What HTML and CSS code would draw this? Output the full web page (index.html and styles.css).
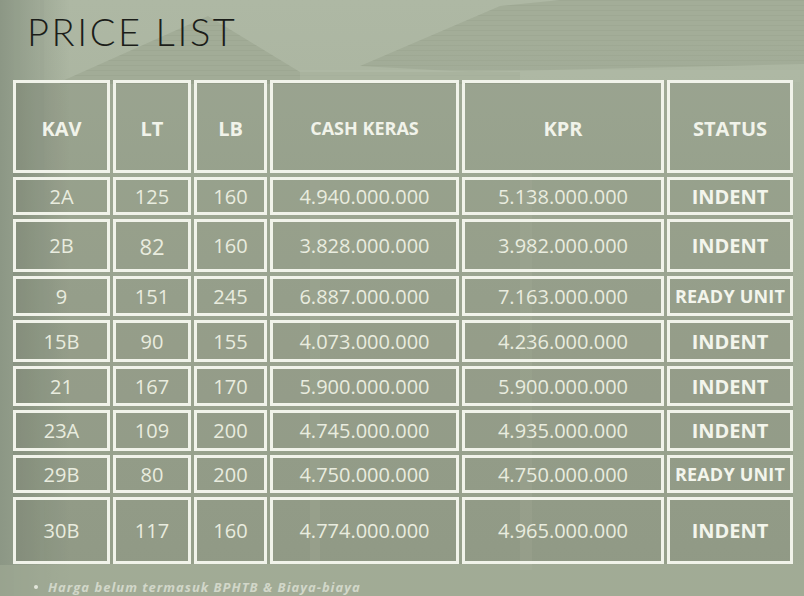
FILE: index.html
```html
<!DOCTYPE html>
<html lang="id">
<head>
<meta charset="utf-8">
<title>Price List</title>
<link rel="stylesheet" href="styles.css">
</head>
<body>
<div class="page">
  <svg class="backdrop" width="804" height="596" viewBox="0 0 804 596" aria-hidden="true">
    <defs>
      <linearGradient id="sky" x1="0" y1="0" x2="0" y2="1">
        <stop offset="0" stop-color="#aeb8a4"/>
        <stop offset="0.5" stop-color="#a6b09b"/>
        <stop offset="1" stop-color="#a0aa95"/>
      </linearGradient>
      <linearGradient id="trees" x1="0" y1="0" x2="1" y2="0">
        <stop offset="0" stop-color="#8c9785"/>
        <stop offset="1" stop-color="#8c9785" stop-opacity="0"/>
      </linearGradient>
      <pattern id="tiles" width="10" height="5" patternUnits="userSpaceOnUse">
        <rect width="10" height="5" fill="#a0aa95"/>
        <rect width="10" height="1" fill="#9aa48f"/>
      </pattern>
    </defs>
    <rect width="804" height="596" fill="url(#sky)"/>
    <polygon points="60,82 208,16 300,72 520,72 520,84 60,84" fill="url(#tiles)" opacity="0.85"/>
    <polygon points="360,66 500,6 560,0 804,0 804,64 470,72" fill="url(#tiles)" opacity="0.8"/>
    <rect x="300" y="70" width="500" height="12" fill="#b0baa6" opacity="0.5"/>
    <rect x="0" y="0" width="70" height="596" fill="url(#trees)"/>
    <rect x="14" y="0" width="6" height="596" fill="#93a08c" opacity="0.5"/>
    <rect x="40" y="0" width="4" height="596" fill="#9aa694" opacity="0.4"/>
    <rect x="310" y="170" width="10" height="400" fill="#b5beaa" opacity="0.35"/>
    <rect x="520" y="170" width="12" height="400" fill="#b5beaa" opacity="0.3"/>
    <rect x="0" y="565" width="804" height="31" fill="#a1ab96" opacity="0.6"/>
  </svg>

  <h1 class="title">PRICE LIST</h1>

  <div class="grid">
    <div class="cell head r-head">KAV</div>
    <div class="cell head r-head">LT</div>
    <div class="cell head r-head">LB</div>
    <div class="cell head head-sm r-head">CASH KERAS</div>
    <div class="cell head r-head">KPR</div>
    <div class="cell head r-head">STATUS</div>

    <div class="cell r-a">2A</div>
    <div class="cell r-a">125</div>
    <div class="cell r-a">160</div>
    <div class="cell r-a">4.940.000.000</div>
    <div class="cell r-a">5.138.000.000</div>
    <div class="cell status r-a">INDENT</div>

    <div class="cell r-b">2B</div>
    <div class="cell big r-b">82</div>
    <div class="cell r-b">160</div>
    <div class="cell r-b">3.828.000.000</div>
    <div class="cell r-b">3.982.000.000</div>
    <div class="cell status r-b">INDENT</div>

    <div class="cell r-c">9</div>
    <div class="cell r-c">151</div>
    <div class="cell r-c">245</div>
    <div class="cell r-c">6.887.000.000</div>
    <div class="cell r-c">7.163.000.000</div>
    <div class="cell status ready r-c">READY UNIT</div>

    <div class="cell r-d">15B</div>
    <div class="cell r-d">90</div>
    <div class="cell r-d">155</div>
    <div class="cell r-d">4.073.000.000</div>
    <div class="cell r-d">4.236.000.000</div>
    <div class="cell status r-d">INDENT</div>

    <div class="cell r-e">21</div>
    <div class="cell r-e">167</div>
    <div class="cell r-e">170</div>
    <div class="cell r-e">5.900.000.000</div>
    <div class="cell r-e">5.900.000.000</div>
    <div class="cell status r-e">INDENT</div>

    <div class="cell r-f">23A</div>
    <div class="cell r-f">109</div>
    <div class="cell r-f">200</div>
    <div class="cell r-f">4.745.000.000</div>
    <div class="cell r-f">4.935.000.000</div>
    <div class="cell status r-f">INDENT</div>

    <div class="cell r-g">29B</div>
    <div class="cell r-g">80</div>
    <div class="cell r-g">200</div>
    <div class="cell r-g">4.750.000.000</div>
    <div class="cell r-g">4.750.000.000</div>
    <div class="cell status ready r-g">READY UNIT</div>

    <div class="cell r-h">30B</div>
    <div class="cell r-h">117</div>
    <div class="cell r-h">160</div>
    <div class="cell r-h">4.774.000.000</div>
    <div class="cell r-h">4.965.000.000</div>
    <div class="cell status r-h">INDENT</div>
  </div>

  <ul class="notes">
    <li>Harga belum termasuk BPHTB &amp; Biaya-biaya</li>
  </ul>
</div>
</body>
</html>
```

FILE: styles.css
```css
html, body {
  margin: 0;
  padding: 0;
  background: #a6b09b;
}

.page {
  position: relative;
  width: 804px;
  height: 596px;
  overflow: hidden;
  font-family: "Open Sans", "DejaVu Sans", sans-serif;
}

.backdrop {
  position: absolute;
  left: 0;
  top: 0;
  z-index: 0;
}

.title {
  position: relative;
  z-index: 1;
  margin: 0;
  padding: 11px 0 0 27px;
  height: 70px;
  box-sizing: border-box;
  font-family: "Lato", "DejaVu Sans", sans-serif;
  font-weight: 300;
  font-size: 38px;
  line-height: 40px;
  letter-spacing: 2.6px;
  color: #1b1d19;
}

.grid {
  position: relative;
  z-index: 1;
  margin: 10px 0 0 13px;
  display: grid;
  grid-template-columns: 97px 78px 73px 189px 202px 126px;
  grid-template-rows: 93px 38px 53px 40px 42px 40px 41px 38px 67px;
  column-gap: 3px;
  row-gap: 4px;
  width: max-content;
  background: rgba(70, 80, 62, 0.12);
}

.cell {
  box-sizing: border-box;
  border: 3px solid #f1f3ea;
  background: rgba(80, 90, 70, 0.07);
  display: flex;
  align-items: center;
  justify-content: center;
  color: #e9ecdf;
  font-size: 20px;
  font-weight: 400;
  white-space: nowrap;
}

.head {
  font-weight: 700;
  color: #f1f3ea;
  padding-top: 3px;
}

.head-sm {
  font-size: 18px;
}

.big {
  font-size: 22px;
}

.status {
  font-weight: 700;
  color: #f3f5ec;
}

.ready {
  font-size: 18px;
  letter-spacing: 0.2px;
}

.notes {
  position: relative;
  z-index: 1;
  margin: 15px 0 0 0;
  padding: 0 0 0 48px;
  font-style: italic;
  font-weight: 700;
  font-size: 13px;
  line-height: 16px;
  letter-spacing: 1px;
  color: rgba(244, 246, 238, 0.6);
}

.notes li {
  list-style: none;
  position: relative;
}

.notes li::before {
  content: "";
  position: absolute;
  left: -14px;
  top: 6px;
  width: 4px;
  height: 4px;
  border-radius: 50%;
  background: rgba(244, 246, 238, 0.8);
}
```
